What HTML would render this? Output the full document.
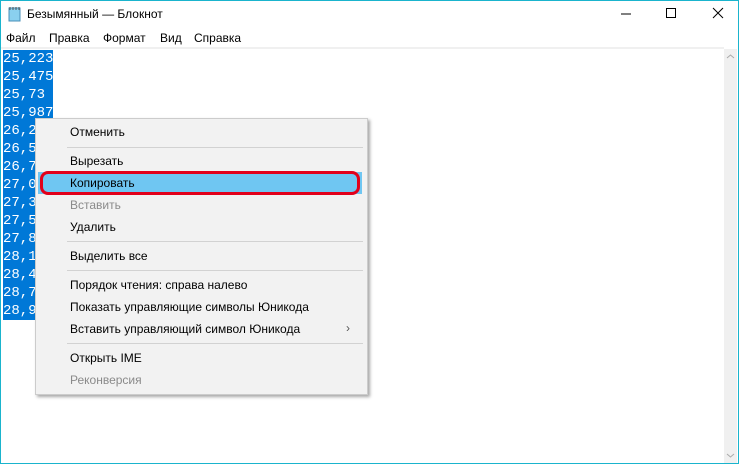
<!DOCTYPE html><html><head><style>
body{margin:0;width:739px;height:464px;background:#fff;position:relative;overflow:hidden;font-family:"Liberation Sans",sans-serif;}
.win{position:absolute;left:0;top:0;width:737px;height:462px;border:1px solid #1ab4cd;}
.t{position:absolute;left:27px;top:7px;font-size:12px;color:#000}
.menu{position:absolute;top:31px;font-size:12px;color:#000}
.txt{position:absolute;left:3px;top:50px;font-family:"Liberation Mono",monospace;font-size:14px;line-height:18px}
.txt div{background:#0078d7;color:#fff;display:table;}
.sb{position:absolute;left:724px;top:49px;width:13px;height:414px;background:#f0f0f0}
.cm{position:absolute;left:35px;top:118px;width:331px;height:275px;background:#f2f2f2;border:1px solid #ccc;box-shadow:2px 2px 3px rgba(0,0,0,.35)}
.it{position:absolute;left:34px;font-size:12px;color:#000}
.dis{color:#8a8a8a}
.sep{position:absolute;left:31px;width:296px;height:1px;background:#d2d2d2}
</style></head><body>
<div class="win"></div>
<svg style="position:absolute;left:7px;top:6px" width="16" height="16"><rect x="2" y="2" width="11" height="13" fill="#8ad0ef" stroke="#4a90b8"/><path d="M3 1v3M6 1v3M9 1v3M12 1v3" stroke="#555"/></svg>
<div class="t">Безымянный — Блокнот</div>
<svg style="position:absolute;left:620px;top:6px" width="110" height="16"><path d="M1 8h10" stroke="#000"/><rect x="46.5" y="2.5" width="9" height="9" fill="none" stroke="#000"/><path d="M93 2l10 10M103 2l-10 10" stroke="#000"/></svg>
<div class="menu" style="left:6px">Файл</div><div class="menu" style="left:49px">Правка</div><div class="menu" style="left:103px">Формат</div><div class="menu" style="left:160px">Вид</div><div class="menu" style="left:194px">Справка</div>
<div style="position:absolute;left:1px;top:47px;width:723px;height:2px;background:#f0f0f0"></div>
<div class="txt"><div>25,223</div><div>25,475</div><div>25,73&nbsp;</div><div>25,987</div><div>26,2</div><div>26,5</div><div>26,7</div><div>27,0</div><div>27,3</div><div>27,5</div><div>27,8</div><div>28,1</div><div>28,4</div><div>28,7</div><div>28,9</div></div>
<div class="sb"><svg width="13" height="414"><path d="M3 9l3.5-3 3.5 3M3 405l3.5 3 3.5-3" stroke="#aaa" fill="none"/></svg></div>
<div class="cm">
<div class="it" style="top:6px">Отменить</div>
<div class="sep" style="top:28px"></div>
<div class="it" style="top:35px">Вырезать</div>
<div style="position:absolute;left:2px;top:53px;width:324px;height:22px;background:#6fc6f2;border-radius:0"></div>
<div style="position:absolute;left:4px;top:52px;width:314px;height:18px;border:3px solid #e2001a;border-radius:8px"></div>
<div class="it" style="top:57px">Копировать</div>
<div class="it dis" style="top:79px">Вставить</div>
<div class="it" style="top:101px">Удалить</div>
<div class="sep" style="top:122px"></div>
<div class="it" style="top:130px">Выделить все</div>
<div class="sep" style="top:151px"></div>
<div class="it" style="top:159px">Порядок чтения: справа налево</div>
<div class="it" style="top:181px">Показать управляющие символы Юникода</div>
<div class="it" style="top:203px">Вставить управляющий символ Юникода</div>
<div style="position:absolute;left:310px;top:202px;font-size:12px;color:#555">›</div>
<div class="sep" style="top:224px"></div>
<div class="it" style="top:232px">Открыть IME</div>
<div class="it dis" style="top:254px">Реконверсия</div>
</div>
</body></html>
